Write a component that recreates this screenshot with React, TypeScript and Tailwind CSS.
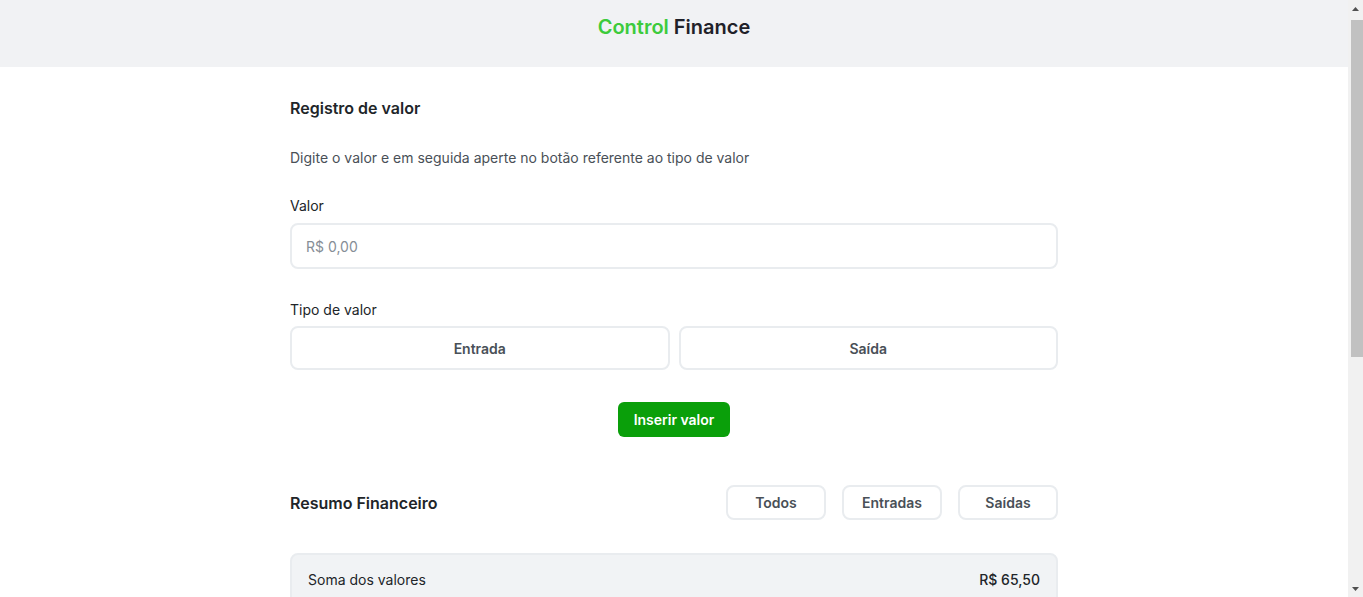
import React, { useState } from 'react';

type Entry = { id: number; value: number; type: 'entrada' | 'saida' };

const initialEntries: Entry[] = [
  { id: 1, value: 45.5, type: 'entrada' },
  { id: 2, value: 30, type: 'entrada' },
  { id: 3, value: 20, type: 'entrada' },
  { id: 4, value: 30, type: 'saida' },
];

const formatBRL = (n: number) =>
  'R$ ' + n.toFixed(2).replace('.', ',');

// Classic scrollbar rail, drawn because the headless page hides the real one
const ScrollRail: React.FC = () => (
  <div aria-hidden className="w-[15px] shrink-0 bg-[#f1f1f1] flex flex-col items-end">
    <div className="w-full h-[17px] flex items-center justify-center">
      <svg width="7" height="4" viewBox="0 0 7 4"><path d="M0 4L3.5 0L7 4Z" fill="#505050" /></svg>
    </div>
    <div className="w-[12px] h-[337px] mt-[3px] bg-[#c1c1c1]" />
    <div className="flex-1" />
    <div className="w-full h-[17px] flex items-center justify-center">
      <svg width="7" height="4" viewBox="0 0 7 4"><path d="M0 0L7 0L3.5 4Z" fill="#505050" /></svg>
    </div>
  </div>
);

const App: React.FC = () => {
  const [entries] = useState<Entry[]>(initialEntries);
  const total = entries.reduce((acc, e) => acc + (e.type === 'entrada' ? e.value : -e.value), 0);

  return (
    <div className="h-screen flex overflow-hidden bg-white font-['Inter',sans-serif] text-[#212529]">
      <div className="flex-1 min-w-0 overflow-y-auto">
        {/* Header */}
        <header className="h-[67px] bg-[#f1f2f4] flex justify-center pt-[15px]">
          <h1 className="text-[20px] leading-[24px] font-semibold">
            <span className="text-[#3ccb3c]">Control</span>{' '}
            <span className="text-[#1f2129]">Finance</span>
          </h1>
        </header>

        <main className="max-w-[768px] mx-auto pb-[64px]">
          {/* Registro */}
          <section className="pt-[29px]">
            <h2 className="text-[16px] leading-[24px] font-semibold text-[#212529]">Registro de valor</h2>
            <p className="mt-[28px] text-[14px] leading-[20px] text-[#495057]">
              Digite o valor e em seguida aperte no botão referente ao tipo de valor
            </p>

            <label className="block mt-[28px] text-[14px] leading-[20px] text-[#212529]">Valor</label>
            <input
              className="mt-[7px] w-full h-[46px] px-[14px] rounded-lg border-2 border-[#e9ecef] text-[14px] placeholder:text-[#868e96] outline-none"
              placeholder="R$ 0,00"
            />

            <p className="mt-[31px] text-[14px] leading-[20px] text-[#212529]">Tipo de valor</p>
            <div className="mt-[6px] grid grid-cols-2 gap-[9px]">
              <button className="h-[44px] rounded-lg border-2 border-[#e9ecef] bg-white text-[14px] font-semibold text-[#495057]">
                Entrada
              </button>
              <button className="h-[44px] rounded-lg border-2 border-[#e9ecef] bg-white text-[14px] font-semibold text-[#495057]">
                Saída
              </button>
            </div>

            <div className="mt-[32px] flex justify-center">
              <button className="h-[35px] px-4 rounded-md bg-[#0a9f0a] text-white text-[14px] font-semibold">
                Inserir valor
              </button>
            </div>
          </section>

          {/* Resumo */}
          <section className="mt-[48px]">
            <div className="flex items-center justify-between">
              <h2 className="text-[16px] leading-[24px] font-semibold text-[#212529]">Resumo Financeiro</h2>
              <div className="flex gap-4">
                {['Todos', 'Entradas', 'Saídas'].map((label) => (
                  <button
                    key={label}
                    className="w-[100px] h-[35px] rounded-lg border-2 border-[#e9ecef] bg-white text-[14px] font-semibold text-[#495057]"
                  >
                    {label}
                  </button>
                ))}
              </div>
            </div>

            <div className="mt-[33px] rounded-lg border-2 border-[#e9ecef] bg-[#f1f3f5] px-4 h-[52px] flex items-center justify-between">
              <span className="text-[14px] text-[#212529]">Soma dos valores</span>
              <span className="text-[14px] font-medium text-[#212529]">{formatBRL(total)}</span>
            </div>

            <ul className="mt-[24px] flex flex-col gap-4">
              {entries.map((e) => (
                <li
                  key={e.id}
                  className="rounded-lg border-2 border-[#e9ecef] bg-[#f1f3f5] px-4 h-[52px] flex items-center justify-between"
                >
                  <span className="text-[14px] text-[#212529]">{formatBRL(e.value)}</span>
                  <div className="flex items-center gap-3">
                    <span className="px-3 py-1 rounded-md bg-[#e9ecef] text-[12px] text-[#495057]">
                      {e.type === 'entrada' ? 'Entrada' : 'Saída'}
                    </span>
                    <button className="w-8 h-8 rounded-md bg-[#e9ecef] flex items-center justify-center text-[#495057]">
                      <svg width="14" height="14" viewBox="0 0 24 24" fill="none" stroke="currentColor" strokeWidth="2" strokeLinecap="round" strokeLinejoin="round">
                        <path d="M3 6h18" />
                        <path d="M19 6v14a2 2 0 0 1-2 2H7a2 2 0 0 1-2-2V6" />
                        <path d="M8 6V4a2 2 0 0 1 2-2h4a2 2 0 0 1 2 2v2" />
                      </svg>
                    </button>
                  </div>
                </li>
              ))}
            </ul>
          </section>
        </main>
      </div>
      <ScrollRail />
    </div>
  );
};

export default App;
